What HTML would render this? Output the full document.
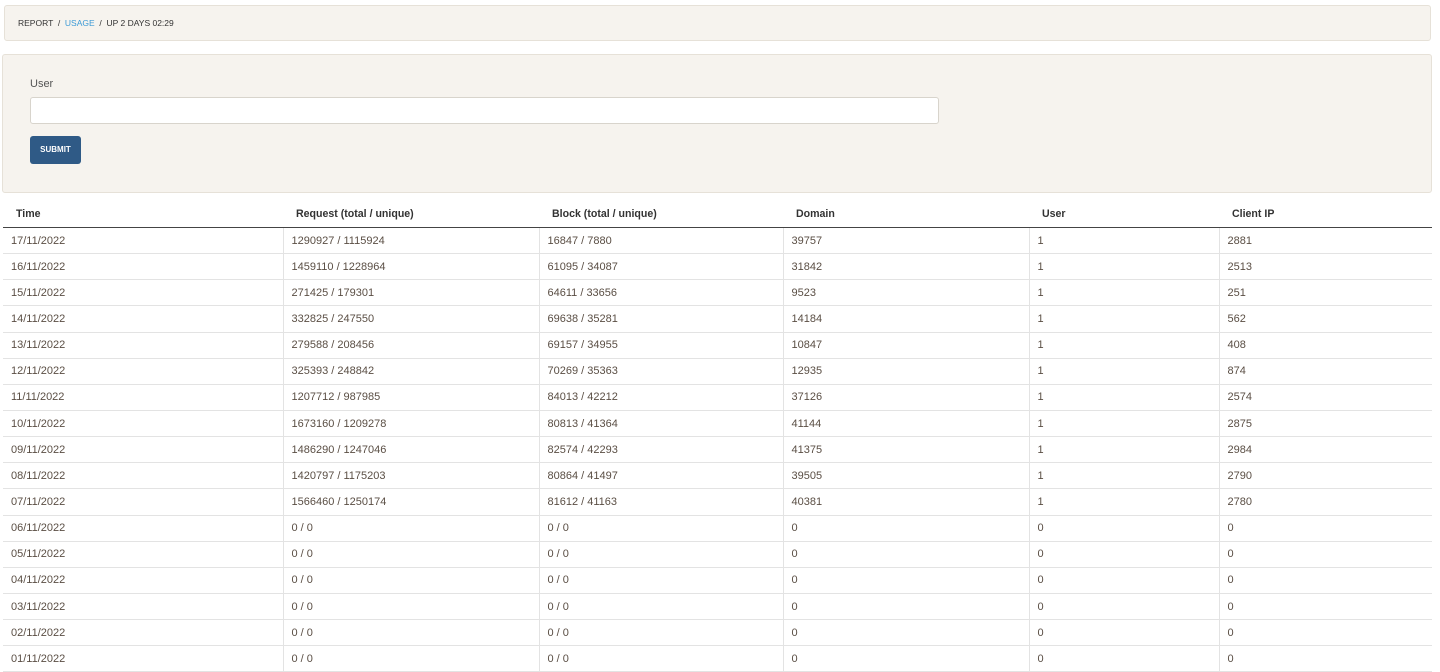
<!DOCTYPE html>
<html><head><style>
body{margin:0;background:#fff;font-family:"Liberation Sans",sans-serif;width:1440px;height:659px;overflow:hidden;color:#333}
.bc{position:absolute;left:4px;top:5px;width:1427px;height:36px;background:#f6f3ee;border:1px solid #e6e1d8;border-radius:3px;font-size:8.5px;color:#333;line-height:35px;box-sizing:border-box;padding-left:13px}
.bc span.l{color:#3c9ad6}
.form{position:absolute;left:2px;top:54px;width:1430px;height:139px;background:#f6f3ee;border:1px solid #e6e1d8;border-radius:3px;box-sizing:border-box}
.lbl{position:absolute;left:27px;top:23px;font-size:11px;color:#555}
.inp{position:absolute;left:27px;top:42px;width:909px;height:27px;background:#fff;border:1px solid #d8d4cc;border-radius:3px;box-sizing:border-box}
.btn{position:absolute;left:27px;top:81px;width:51px;height:28px;background:#2f5a86;border-radius:3px;color:#fff;font-size:8px;font-weight:bold;line-height:28px;text-align:center}
table{position:absolute;left:3px;top:200px;width:1429px;border-collapse:collapse;font-size:11px}
th{text-align:left;font-weight:bold;color:#333;height:27px;padding:0 0 0 13px;border-bottom:1.5px solid #444;font-size:10.6px}
td{height:25.15px;padding:0 0 0 8px;border:1px solid #e3e3e3;color:#5a4e44;border-top:none}
tr td:first-child{border-left:none}tr td:last-child{border-right:none}
</style></head><body>
<div class="bc">REPORT &nbsp;/&nbsp; <span class="l">USAGE</span> &nbsp;/&nbsp; UP 2 DAYS 02:29</div>
<div class="form"><div class="lbl">User</div><div class="inp"></div><div class="btn">SUBMIT</div></div>
<table>
<colgroup><col style="width:280px"><col style="width:256px"><col style="width:244px"><col style="width:246px"><col style="width:190px"><col style="width:213px"></colgroup>
<tr><th>Time</th><th>Request (total / unique)</th><th>Block (total / unique)</th><th>Domain</th><th>User</th><th>Client IP</th></tr>
<tr><td>17/11/2022</td><td>1290927 / 1115924</td><td>16847 / 7880</td><td>39757</td><td>1</td><td>2881</td></tr>
<tr><td>16/11/2022</td><td>1459110 / 1228964</td><td>61095 / 34087</td><td>31842</td><td>1</td><td>2513</td></tr>
<tr><td>15/11/2022</td><td>271425 / 179301</td><td>64611 / 33656</td><td>9523</td><td>1</td><td>251</td></tr>
<tr><td>14/11/2022</td><td>332825 / 247550</td><td>69638 / 35281</td><td>14184</td><td>1</td><td>562</td></tr>
<tr><td>13/11/2022</td><td>279588 / 208456</td><td>69157 / 34955</td><td>10847</td><td>1</td><td>408</td></tr>
<tr><td>12/11/2022</td><td>325393 / 248842</td><td>70269 / 35363</td><td>12935</td><td>1</td><td>874</td></tr>
<tr><td>11/11/2022</td><td>1207712 / 987985</td><td>84013 / 42212</td><td>37126</td><td>1</td><td>2574</td></tr>
<tr><td>10/11/2022</td><td>1673160 / 1209278</td><td>80813 / 41364</td><td>41144</td><td>1</td><td>2875</td></tr>
<tr><td>09/11/2022</td><td>1486290 / 1247046</td><td>82574 / 42293</td><td>41375</td><td>1</td><td>2984</td></tr>
<tr><td>08/11/2022</td><td>1420797 / 1175203</td><td>80864 / 41497</td><td>39505</td><td>1</td><td>2790</td></tr>
<tr><td>07/11/2022</td><td>1566460 / 1250174</td><td>81612 / 41163</td><td>40381</td><td>1</td><td>2780</td></tr>
<tr><td>06/11/2022</td><td>0 / 0</td><td>0 / 0</td><td>0</td><td>0</td><td>0</td></tr>
<tr><td>05/11/2022</td><td>0 / 0</td><td>0 / 0</td><td>0</td><td>0</td><td>0</td></tr>
<tr><td>04/11/2022</td><td>0 / 0</td><td>0 / 0</td><td>0</td><td>0</td><td>0</td></tr>
<tr><td>03/11/2022</td><td>0 / 0</td><td>0 / 0</td><td>0</td><td>0</td><td>0</td></tr>
<tr><td>02/11/2022</td><td>0 / 0</td><td>0 / 0</td><td>0</td><td>0</td><td>0</td></tr>
<tr><td>01/11/2022</td><td>0 / 0</td><td>0 / 0</td><td>0</td><td>0</td><td>0</td></tr>
</table>
</body></html>
